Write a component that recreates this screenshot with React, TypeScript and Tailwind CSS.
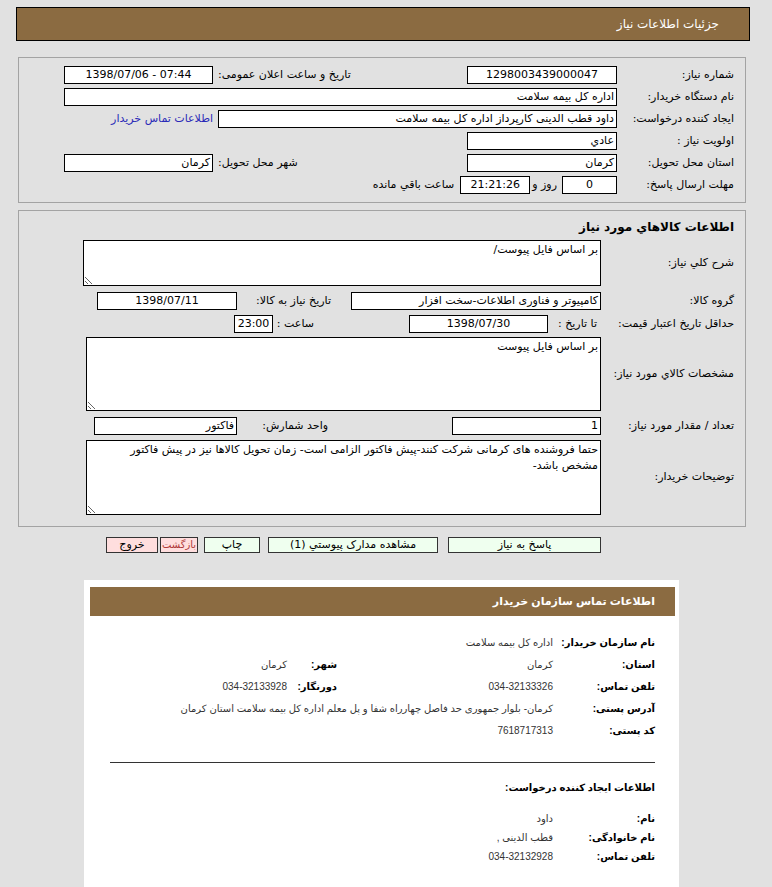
import React from "react";

// جعبه‌ی فقط‌خواندنی شبیه input
const Box: React.FC<{ className?: string; ltr?: boolean; children?: React.ReactNode }> = ({
  className = "",
  ltr,
  children,
}) => (
  <div
    dir={ltr ? "ltr" : undefined}
    className={`h-[18px] border border-black bg-white px-[2px] leading-[16px] whitespace-nowrap overflow-hidden ${className}`}
  >
    {children}
  </div>
);

const Area: React.FC<{ value: string; className?: string }> = ({ value, className = "" }) => (
  <textarea
    readOnly
    value={value}
    className={`block border border-black bg-white px-[2px] py-[1px] leading-[16px] text-black ${className}`}
  />
);

const Label: React.FC<{ className?: string; children: React.ReactNode }> = ({ className = "", children }) => (
  <div className={`h-[18px] leading-[18px] whitespace-nowrap ${className}`}>{children}</div>
);

const Btn: React.FC<{ className?: string; children: React.ReactNode }> = ({ className = "", children }) => (
  <div
    className={`h-[16px] border border-[#333] text-center leading-[14px] whitespace-nowrap overflow-hidden ${className}`}
  >
    {children}
  </div>
);

// ردیف‌های پنل تماس
const Row: React.FC<{ label: string; value: React.ReactNode; ltr?: boolean }> = ({ label, value, ltr }) => (
  <div className="flex h-[22px] items-center">
    <div className="w-[102px] shrink-0 whitespace-nowrap text-[10px] font-bold">{label}</div>
    <div dir={ltr ? "ltr" : undefined} className="whitespace-nowrap text-[10px] text-[#333]">
      {value}
    </div>
  </div>
);

export default function App() {
  const buyerNote =
    "حتما فروشنده های کرمانی شرکت کنند-پیش فاکتور الزامی است- زمان تحویل کالاها نیز در پیش فاکتور\nمشخص باشد-";

  return (
    <div
      dir="rtl"
      className="min-h-screen w-[772px] overflow-hidden bg-[#e1e1e1] pt-[7px] text-[11px] text-black font-['DejaVu_Sans',sans-serif]"
    >
      {/* عنوان */}
      <div className="mr-[22px] flex h-[34px] w-[734px] items-center border border-black bg-[#8b6b41] pr-[30px] text-[12px] text-white">
        جزئیات اطلاعات نیاز
      </div>

      {/* مشخصات نیاز */}
      <div className="mr-[26px] mt-[16px] w-[728px] border border-[#a3a3a3] pb-[8px] pl-[45px] pr-[11px] pt-[8px]">
        <div className="grid grid-cols-[117px_150px_254px_149px] gap-y-[4px]">
          <Label>شماره نیاز:</Label>
          <Box ltr className="text-center">1298003439000047</Box>
          <Label className="pl-[5px] text-left">تاریخ و ساعت اعلان عمومی:</Label>
          <Box ltr className="text-center">1398/07/06 - 07:44</Box>

          <Label>نام دستگاه خریدار:</Label>
          <Box className="col-span-3">اداره کل بیمه سلامت</Box>

          <Label>ایجاد کننده درخواست:</Label>
          <Box className="col-span-2 w-[399px]">داود قطب الدینی کارپرداز اداره کل بیمه سلامت</Box>
          <Label className="text-[#2a2ab8]">اطلاعات تماس خریدار</Label>

          <Label>اولویت نیاز :</Label>
          <Box>عادي</Box>
          <div className="col-span-2" />

          <Label>استان محل تحویل:</Label>
          <Box>کرمان</Box>
          <Label className="pl-[5px] text-left">شهر محل تحویل:</Label>
          <Box>کرمان</Box>

          <Label>مهلت ارسال پاسخ:</Label>
          <div className="col-span-3 flex items-center">
            <Box className="w-[55px] text-center">0</Box>
            <span className="mr-[5px] ml-[2px]">روز و</span>
            <Box ltr className="w-[70px] text-center">21:21:26</Box>
            <span className="mr-[6px]">ساعت باقي مانده</span>
          </div>
        </div>
      </div>

      {/* اطلاعات کالاها */}
      <div className="mr-[26px] mt-[7px] w-[728px] border border-[#a3a3a3] pb-[11px] pl-[64px] pr-[11px] pt-[8px]">
        <div className="h-[16px] text-[12px] font-bold leading-[16px]">اطلاعات کالاهاي مورد نیاز</div>

        <div className="mt-[5px] flex items-center">
          <div className="w-[133px] shrink-0">شرح کلي نیاز:</div>
          <Area value="بر اساس فایل پیوست/" className="h-[46px] w-[518px]" />
        </div>

        <div className="mt-[6px] flex items-center">
          <Label className="w-[133px] shrink-0">گروه کالا:</Label>
          <Box className="w-[250px]">کامپیوتر و فناوری اطلاعات-سخت افزار</Box>
          <Label className="mr-[20px] w-[94px]">تاریخ نیاز به کالا:</Label>
          <Box ltr className="w-[140px] text-center">1398/07/11</Box>
        </div>

        <div className="mt-[5px] flex items-center">
          <Label className="w-[133px] shrink-0">حداقل تاریخ اعتبار قیمت:</Label>
          <Label className="w-[53px] pr-[4px]">تا تاریخ :</Label>
          <Box ltr className="w-[139px] text-center">1398/07/30</Box>
          <Label className="mr-[95px] w-[41px]">ساعت :</Label>
          <Box ltr className="w-[39px] text-center">23:00</Box>
        </div>

        <div className="mt-[4px] flex items-center">
          <div className="w-[133px] shrink-0">مشخصات کالاي مورد نیاز:</div>
          <Area value="بر اساس فایل پیوست" className="h-[74px] w-[515px]" />
        </div>

        <div className="mt-[6px] flex items-center">
          <Label className="w-[133px] shrink-0">تعداد / مقدار مورد نیاز:</Label>
          <Box className="w-[149px]">1</Box>
          <Label className="mr-[124px] w-[91px]">واحد شمارش:</Label>
          <Box className="w-[143px]">فاکتور</Box>
        </div>

        <div className="mt-[5px] flex items-center">
          <div className="w-[133px] shrink-0">توضیحات خریدار:</div>
          <Area value={buyerNote} className="h-[75px] w-[515px]" />
        </div>
      </div>

      {/* دکمه‌ها */}
      <div className="mt-[10px] flex pr-[171px]">
        <Btn className="w-[153px] bg-[#efffef]">پاسخ به نیاز</Btn>
        <Btn className="mr-[10px] w-[170px] bg-[#efffef]">مشاهده مدارک پیوستي (1)</Btn>
        <Btn className="mr-[8px] w-[56px] bg-[#efffef]">چاپ</Btn>
        <Btn className="mr-[6px] w-[38px] bg-[#ffdede] text-[10px] text-[#b03a3a]">بازگشت</Btn>
        <Btn className="mr-[2px] w-[52px] bg-[#ffdede]">خروج</Btn>
      </div>

      {/* اطلاعات تماس */}
      <div className="mr-[93px] mt-[27px] w-[595px] bg-white pb-[60px] pl-[6px] pr-[4px] pt-[7px] font-['Liberation_Sans','DejaVu_Sans',sans-serif]">
        <div className="flex h-[29px] items-center bg-[#8b6b41] pr-[20px] text-[11px] font-bold text-white">
          اطلاعات تماس سازمان خریدار
        </div>

        <div className="pr-[20px]">
          <div className="mt-[15px]">
            <Row label="نام سازمان خریدار:" value="اداره کل بیمه سلامت" />
            <div className="flex h-[22px] items-center">
              <div className="w-[102px] shrink-0 text-[10px] font-bold">استان:</div>
              <div className="w-[216px] text-[10px] text-[#333]">کرمان</div>
              <div className="w-[50px] text-[10px] font-bold">شهر:</div>
              <div className="text-[10px] text-[#333]">کرمان</div>
            </div>
            <div className="flex h-[22px] items-center">
              <div className="w-[102px] shrink-0 text-[10px] font-bold">تلفن تماس:</div>
              <div dir="ltr" className="w-[216px] text-right text-[10px] text-[#333]">034-32133326</div>
              <div className="w-[50px] text-[10px] font-bold">دورنگار:</div>
              <div dir="ltr" className="text-[10px] text-[#333]">034-32133928</div>
            </div>
            <Row
              label="آدرس پستی:"
              value="کرمان- بلوار جمهوری حد فاصل چهارراه شفا و پل معلم اداره کل بیمه سلامت استان کرمان"
            />
            <Row label="کد پستی:" value="7618717313" ltr />
          </div>

          <div className="mt-[21px] h-px w-[545px] bg-[#333]" />

          <div className="mt-[17px] h-[16px] text-[10px] font-bold leading-[16px]">اطلاعات ایجاد کننده درخواست:</div>

          <div className="mt-[13px] [&>div]:h-[19px]">
            <Row label="نام:" value="داود" />
            <Row label="نام خانوادگی:" value="قطب الدینی ," />
            <Row label="تلفن تماس:" value="034-32132928" ltr />
          </div>
        </div>
      </div>
    </div>
  );
}
